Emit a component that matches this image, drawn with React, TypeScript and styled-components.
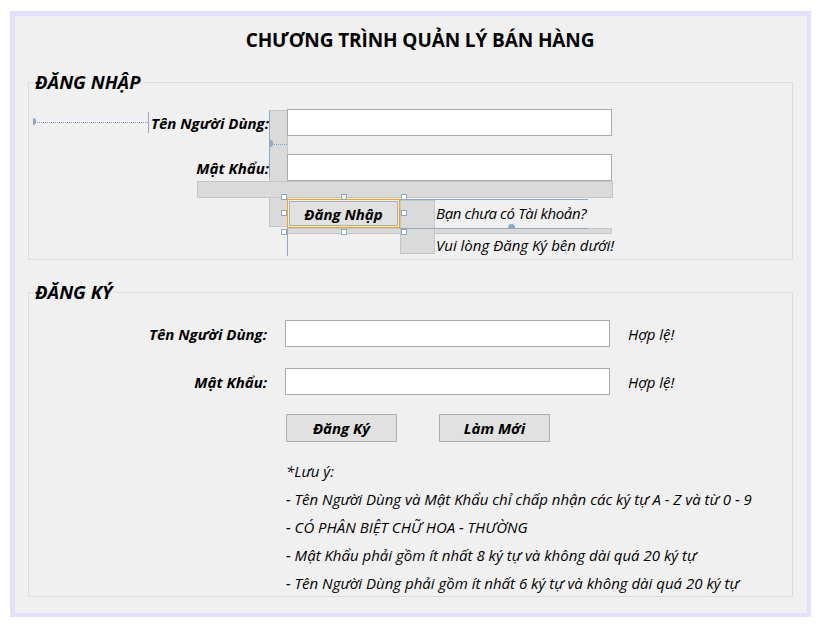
import React from "react";
import styled, { createGlobalStyle, css } from "styled-components";

const GlobalStyle = createGlobalStyle`
  html, body { margin: 0; padding: 0; background: #ffffff; }
  body { font-family: "Open Sans", "Noto Sans", sans-serif; color: #000; }
  * { box-sizing: border-box; }
`;

const Frame = styled.div`
  margin: 11px 0 0 10px;
  width: 801px;
  height: 606px;
  border: 5px solid #e1e1fb;
  border-right-width: 4px;
  border-bottom-width: 4px;
  background: #f0f0f0;
  padding-left: 13px;
  display: flex;
  flex-direction: column;
`;

const Title = styled.h1`
  margin: 12px 0 0 0;
  padding-left: 5px;
  font-size: 19px;
  line-height: 24px;
  font-weight: 700;
  text-align: center;
  letter-spacing: -0.1px;
`;

const Group = styled.section<{ $top: number; $height: number; $pad: number }>`
  position: relative;
  margin-top: ${(p) => p.$top}px;
  width: 765px;
  height: ${(p) => p.$height}px;
  border: 1px solid #dcdcdc;
  padding-top: ${(p) => p.$pad}px;
`;

const Legend = styled.h2`
  position: absolute;
  left: 5px;
  top: -12px;
  margin: 0;
  padding: 0 2px 0 1px;
  background: #f0f0f0;
  font-size: 18.5px;
  line-height: 22px;
  font-weight: 700;
  font-style: italic;
  letter-spacing: 0;
`;

const FormGrid = styled.div<{ $label: number; $gap: number; $rowGap: number }>`
  display: grid;
  grid-template-columns: ${(p) => p.$label}px 325px auto;
  column-gap: ${(p) => p.$gap}px;
  row-gap: ${(p) => p.$rowGap}px;
  align-items: center;
`;

const Label = styled.label`
  justify-self: end;
  font-size: 15px;
  font-weight: 700;
  font-style: italic;
  white-space: nowrap;
`;

const TextBox = styled.input`
  width: 325px;
  height: 27px;
  border: 1px solid #a9a9b1;
  background: #ffffff;
  padding: 0 4px;
  font: inherit;
  outline: none;
`;

const Note = styled.span<{ $tight?: boolean }>`
  font-size: 15px;
  font-style: italic;
  white-space: nowrap;
  letter-spacing: ${(p) => (p.$tight ? "-0.35px" : "0")};
`;

const Button = styled.button<{ $selected?: boolean; $w: number }>`
  width: ${(p) => p.$w}px;
  height: 28px;
  background: #e1e1e1;
  border: 1px solid #adadad;
  font-family: inherit;
  font-size: 15px;
  font-weight: 700;
  font-style: italic;
  color: #000;
  padding: 0;
  ${(p) =>
    p.$selected &&
    css`
      height: 29px;
      border: 1px solid #ffa500;
      box-shadow: inset 0 0 0 1px #f0f0f0, inset 0 0 0 2px #adadad;
    `}
`;

const ButtonCell = styled.div`
  grid-column: 2 / span 2;
  display: flex;
  align-items: flex-start;
  gap: 36px;
`;

const SelWrap = styled.div`
  position: relative;
  display: flex;
`;

const Handle = styled.span<{ $x: number; $y: number }>`
  position: absolute;
  left: ${(p) => p.$x}px;
  top: ${(p) => p.$y}px;
  width: 6px;
  height: 6px;
  background: #ffffff;
  border: 1px solid #8da5c0;
  z-index: 3;
`;

const HintLines = styled.div`
  display: flex;
  flex-direction: column;
  gap: 12px;
  padding-top: 4px;
  line-height: 20px;
`;

const ActionRow = styled.div`
  grid-column: 2 / span 2;
  display: flex;
  gap: 42px;
  padding-left: 1px;
  margin-top: -2px;
`;

const Notes = styled.div`
  grid-column: 2 / span 2;
  display: flex;
  flex-direction: column;
  padding-left: 1px;
  margin-top: -6px;
  line-height: 28px;
`;

/* design-time overlays (lie over the form) */
const Overlay = styled.div<{ $x: number; $y: number; $w: number; $h: number }>`
  position: absolute;
  left: ${(p) => p.$x}px;
  top: ${(p) => p.$y}px;
  width: ${(p) => p.$w}px;
  height: ${(p) => p.$h}px;
  pointer-events: none;
`;

const MarginBox = styled(Overlay)`
  background: #dadada;
  border: 1px solid #c6c6c6;
  z-index: 0;
`;

const DotLine = styled(Overlay)`
  border-top: 1px dotted #7d9cc0;
  z-index: 2;
`;

const SnapLine = styled(Overlay)`
  background: #8fa8c4;
  z-index: 2;
`;

const Marker = styled(Overlay)<{ $dir: "right" | "up" }>`
  background: #8fa8c4;
  z-index: 2;
  border-radius: ${(p) => (p.$dir === "right" ? "0 4px 4px 0" : "4px 4px 0 0")};
`;

const Front = styled.div`
  position: relative;
  z-index: 1;
`;

export default function App() {
  return (
    <>
      <GlobalStyle />
      <Frame>
        <Title>CHƯƠNG TRÌNH QUẢN LÝ BÁN HÀNG</Title>

        <Group $top={30} $height={178} $pad={26}>
          <Legend>ĐĂNG NHẬP</Legend>

          <MarginBox $x={240} $y={27} $w={19} $h={117} />
          <SnapLine $x={240} $y={27} $w={1} $h={68} />
          <MarginBox $x={168} $y={98} $w={416} $h={17} />
          <MarginBox $x={258} $y={145} $w={325} $h={6} />
          <MarginBox $x={371} $y={117} $w={35} $h={54} />
          <DotLine $x={4} $y={39} $w={115} $h={1} />
          <Marker $x={4} $y={35} $w={3} $h={7} $dir="right" />
          <SnapLine $x={119} $y={29} $w={1} $h={21} />
          <DotLine $x={241} $y={61} $w={17} $h={1} />
          <Marker $x={241} $y={57} $w={3} $h={7} $dir="right" />
          <SnapLine $x={371} $y={116} $w={188} $h={1} />
          <SnapLine $x={371} $y={145} $w={188} $h={1} />
          <Marker $x={479} $y={141} $w={7} $h={4} $dir="up" />
          <SnapLine $x={258} $y={144} $w={1} $h={29} />

          <FormGrid $label={240} $gap={18} $rowGap={18}>
            <Label>Tên Người Dùng:</Label>
            <Front>
              <TextBox />
            </Front>
            <span />
            <Label>Mật Khẩu:</Label>
            <Front>
              <TextBox type="password" />
            </Front>
            <span />
            <span />
            <ButtonCell>
              <SelWrap>
                <Button $w={113} $selected>
                  Đăng Nhập
                </Button>
                <Handle $x={-6} $y={-5} />
                <Handle $x={54} $y={-5} />
                <Handle $x={114} $y={-5} />
                <Handle $x={-6} $y={11} />
                <Handle $x={114} $y={11} />
                <Handle $x={-6} $y={30} />
                <Handle $x={54} $y={30} />
                <Handle $x={114} $y={30} />
              </SelWrap>
              <HintLines>
                <Note $tight>Bạn chưa có Tài khoản?</Note>
                <Note>Vui lòng Đăng Ký bên dưới!</Note>
              </HintLines>
            </ButtonCell>
          </FormGrid>
        </Group>

        <Group $top={32} $height={305} $pad={27}>
          <Legend>ĐĂNG KÝ</Legend>
          <FormGrid $label={238} $gap={18} $rowGap={21}>
            <Label>Tên Người Dùng:</Label>
            <TextBox />
            <Note>Hợp lệ!</Note>
            <Label>Mật Khẩu:</Label>
            <TextBox type="password" />
            <Note>Hợp lệ!</Note>
            <span />
            <ActionRow>
              <Button $w={111}>Đăng Ký</Button>
              <Button $w={111}>Làm Mới</Button>
            </ActionRow>
            <span />
            <Notes>
              <Note>*Lưu ý:</Note>
              <Note>- Tên Người Dùng và Mật Khẩu chỉ chấp nhận các ký tự A - Z và từ 0 - 9</Note>
              <Note>- CÓ PHÂN BIỆT CHỮ HOA - THƯỜNG</Note>
              <Note>- Mật Khẩu phải gồm ít nhất 8 ký tự và không dài quá 20 ký tự</Note>
              <Note>- Tên Người Dùng phải gồm ít nhất 6 ký tự và không dài quá 20 ký tự</Note>
            </Notes>
          </FormGrid>
        </Group>
      </Frame>
    </>
  );
}
